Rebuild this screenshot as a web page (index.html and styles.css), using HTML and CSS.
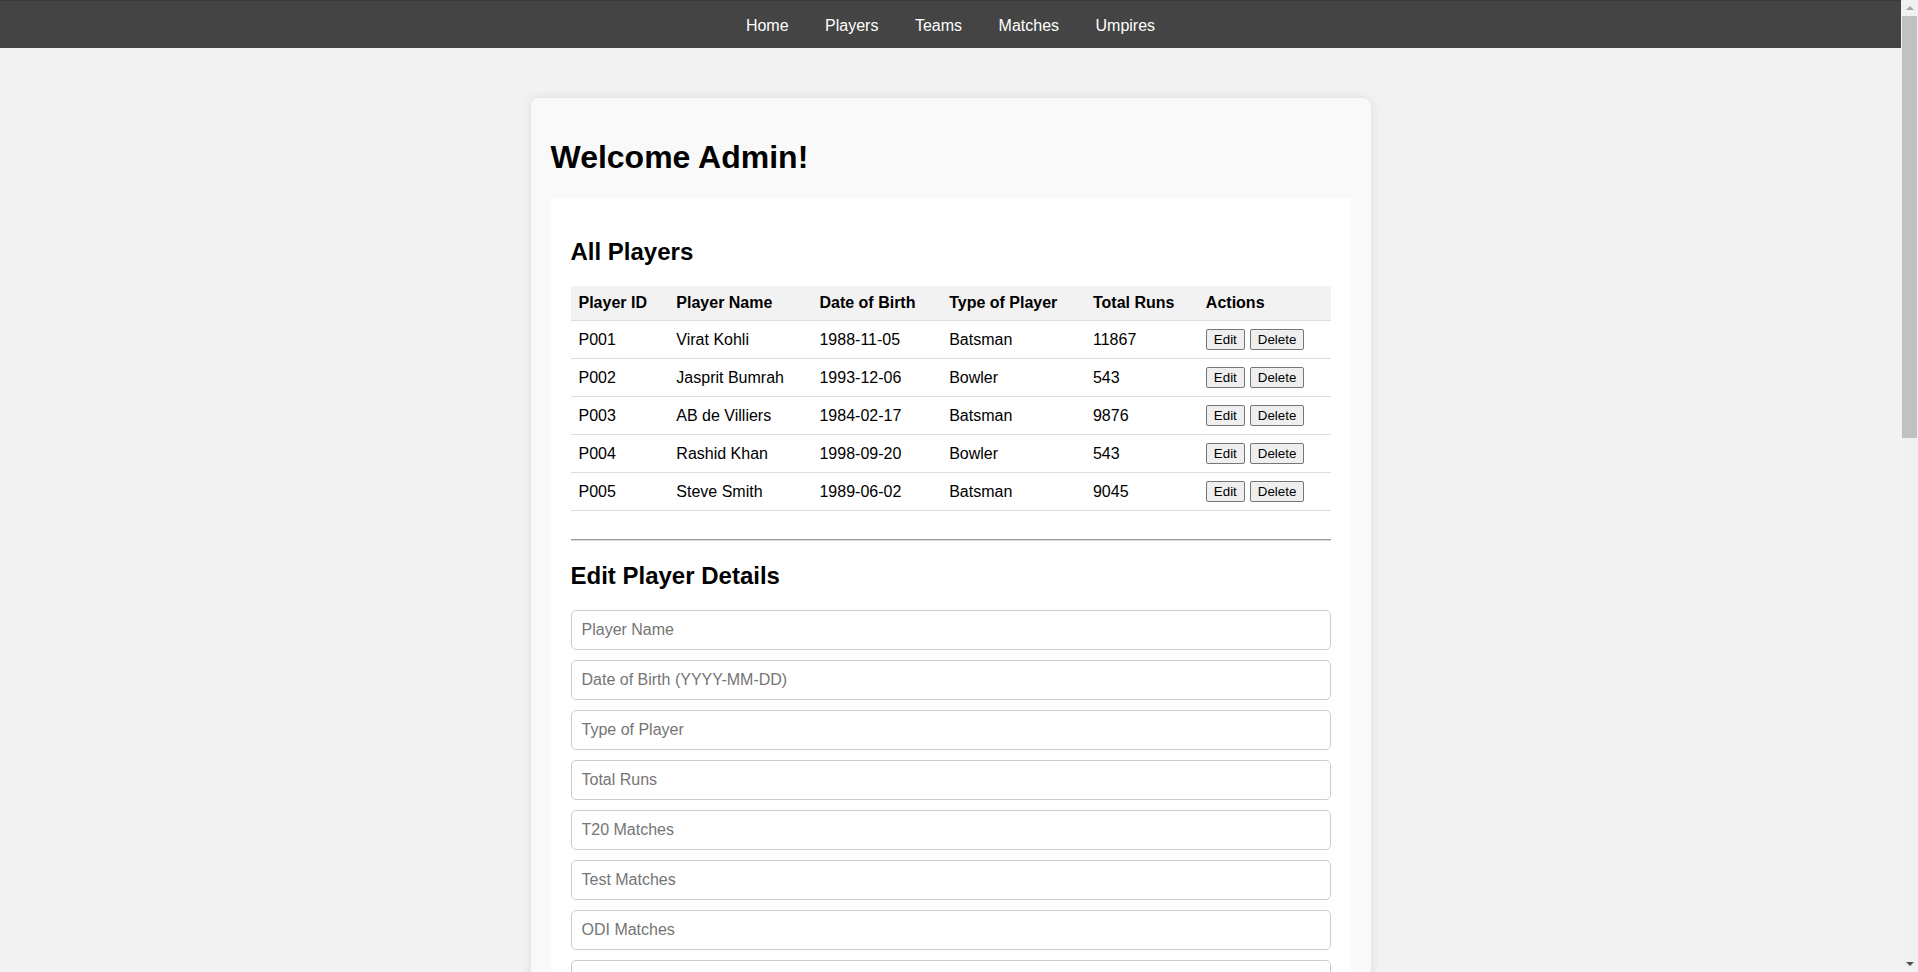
FILE: index.html
```html
<!DOCTYPE html>
<html lang="en">
<head>
<meta charset="utf-8">
<title>Admin Dashboard</title>
<link rel="stylesheet" href="styles.css">
</head>
<body>
<nav class="navbar">
  <a href="#" class="nav-link">Home</a>
  <a href="#" class="nav-link">Players</a>
  <a href="#" class="nav-link">Teams</a>
  <a href="#" class="nav-link">Matches</a>
  <a href="#" class="nav-link">Umpires</a>
</nav>
<main class="container">
  <h1 class="welcome">Welcome Admin!</h1>
  <section class="panel">
    <h2 class="section-title">All Players</h2>
    <table class="players-table">
      <thead>
        <tr><th>Player ID</th><th>Player Name</th><th>Date of Birth</th><th>Type of Player</th><th>Total Runs</th><th>Actions</th></tr>
      </thead>
      <tbody>
        <tr><td>P001</td><td>Virat Kohli</td><td>1988-11-05</td><td>Batsman</td><td>11867</td><td><button class="btn">Edit</button><button class="btn">Delete</button></td></tr>
        <tr><td>P002</td><td>Jasprit Bumrah</td><td>1993-12-06</td><td>Bowler</td><td>543</td><td><button class="btn">Edit</button><button class="btn">Delete</button></td></tr>
        <tr><td>P003</td><td>AB de Villiers</td><td>1984-02-17</td><td>Batsman</td><td>9876</td><td><button class="btn">Edit</button><button class="btn">Delete</button></td></tr>
        <tr><td>P004</td><td>Rashid Khan</td><td>1998-09-20</td><td>Bowler</td><td>543</td><td><button class="btn">Edit</button><button class="btn">Delete</button></td></tr>
        <tr><td>P005</td><td>Steve Smith</td><td>1989-06-02</td><td>Batsman</td><td>9045</td><td><button class="btn">Edit</button><button class="btn">Delete</button></td></tr>
      </tbody>
    </table>
    <hr class="divider">
    <h2 class="section-title form-title">Edit Player Details</h2>
    <form class="edit-form">
      <input class="field" type="text" placeholder="Player Name">
      <input class="field" type="text" placeholder="Date of Birth (YYYY-MM-DD)">
      <input class="field" type="text" placeholder="Type of Player">
      <input class="field" type="text" placeholder="Total Runs">
      <input class="field" type="text" placeholder="T20 Matches">
      <input class="field" type="text" placeholder="Test Matches">
      <input class="field" type="text" placeholder="ODI Matches">
      <input class="field" type="text" placeholder="Total Wickets">
      <input class="field" type="text" placeholder="Team ID">
      <button class="submit" type="submit">Update Player</button>
    </form>
  </section>
</main>
<div class="scrollbar" aria-hidden="true">
  <span class="scroll-arrow scroll-up"></span>
  <span class="scroll-thumb"></span>
  <span class="scroll-arrow scroll-down"></span>
</div>
</body>
</html>
```
FILE: styles.css
```css
html, body {
  padding: 0;
}
html {
  margin: 0;
}
body {
  margin: 0 17px 0 0;
  background: #f2f2f2;
  font-family: "Liberation Sans", Arial, sans-serif;
  color: #000;
}
.navbar {
  box-sizing: border-box;
  height: 48px;
  padding-top: 2px;
  background: #444;
  border-top: 1px solid #3a3a3a;
  display: flex;
  justify-content: center;
  align-items: center;
  gap: 36.5px;
}
.nav-link {
  color: #fff;
  text-decoration: none;
  font-size: 16px;
}
.container {
  width: 800px;
  margin: 50px auto 40px;
  padding: 20px;
  background: #f9f9f9;
  border-radius: 8px;
  box-shadow: 0 0 10px rgba(0, 0, 0, 0.1);
}
.welcome {
  font-size: 32px;
  margin: 21px 0 22px;
}
.panel {
  background: #fff;
  padding: 20px;
}
.section-title {
  font-size: 24px;
  margin: 20px 0 20px;
}
.form-title {
  margin-bottom: 19.5px;
}
.players-table {
  width: 100%;
  border-collapse: collapse;
}
.players-table th,
.players-table td {
  padding: 8px;
  text-align: left;
  border-bottom: 1px solid #ddd;
  font-size: 16px;
}
.players-table th {
  background: #f2f2f2;
  font-weight: bold;
}
.btn {
  font: 13.333px "Liberation Sans", Arial, sans-serif;
  padding: 1px 7px;
  margin: 0 5px 0 0;
  border: 1px solid #767676;
  border-radius: 2px;
  background: #efefef;
  color: #000;
  height: 21px;
  vertical-align: baseline;
}
.btn:last-child {
  margin-right: 0;
}
.divider {
  border: 0;
  border-top: 1px solid #999;
  border-bottom: 1px solid #ddd;
  margin: 28px 0 21px;
}
.edit-form {
  display: flex;
  flex-direction: column;
}
.field {
  box-sizing: border-box;
  width: 100%;
  height: 40px;
  padding: 10px;
  margin: 0 0 10px;
  border: 1px solid #ccc;
  border-radius: 5px;
  font: 16px "Liberation Sans", Arial, sans-serif;
  background: #fff;
}
.field::placeholder {
  color: #757575;
}
.submit {
  align-self: flex-start;
  padding: 10px 20px;
  font: 16px "Liberation Sans", Arial, sans-serif;
  background: #444;
  color: #fff;
  border: 0;
  border-radius: 5px;
}
.scrollbar {
  position: fixed;
  top: 0;
  right: 0;
  bottom: 0;
  width: 17px;
  background: #f1f1f1;
  display: flex;
  flex-direction: column;
  align-items: center;
}
.scroll-arrow {
  width: 0;
  height: 0;
  border-left: 4px solid transparent;
  border-right: 4px solid transparent;
}
.scroll-up {
  margin-top: 6px;
  border-bottom: 4px solid #a3a3a3;
}
.scroll-thumb {
  width: 15px;
  margin: 6px 0 0;
  height: 422px;
  background: #c1c1c1;
}
.scroll-down {
  margin-top: auto;
  margin-bottom: 6px;
  border-top: 4px solid #505050;
}
```
